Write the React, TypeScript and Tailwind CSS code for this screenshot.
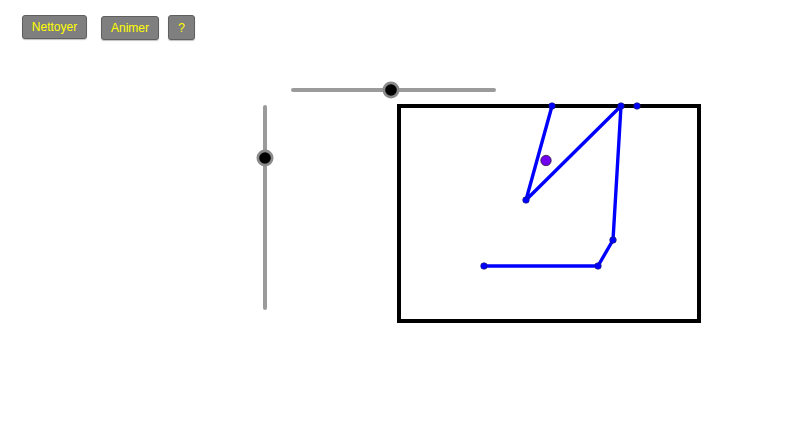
import React from "react";

const font = { fontFamily: '"Liberation Sans", Arial, sans-serif' };

function ToolButton({ label, className }: { label: string; className: string }) {
  return (
    <button
      className={`flex items-center justify-center rounded-[3px] border border-[#5f5f5f] bg-[#7f7f7f] text-[12px] text-[#ffff00] shadow-[0_1px_1px_rgba(0,0,0,0.25)] ${className}`}
    >
      {label}
    </button>
  );
}

// Points of the blue polyline, in canvas pixels.
const path: [number, number][] = [
  [552, 106],
  [526, 200],
  [621, 106],
  [613, 240],
  [598, 266],
  [484, 266],
];

export default function App() {
  return (
    <div className="relative h-[430px] w-[800px] overflow-hidden bg-white" style={font}>
      <svg className="absolute inset-0" width={800} height={430} viewBox="0 0 800 430">
        {/* horizontal slider */}
        <line x1={293} y1={90} x2={494} y2={90} stroke="#9b9b9b" strokeWidth={4} strokeLinecap="round" />
        <circle cx={391} cy={90} r={8.5} fill="#8a8a8a" />
        <circle cx={391} cy={90} r={5.8} fill="#000" />

        {/* vertical slider */}
        <line x1={265} y1={107} x2={265} y2={308} stroke="#9b9b9b" strokeWidth={4} strokeLinecap="round" />
        <circle cx={265} cy={158} r={8.5} fill="#8a8a8a" />
        <circle cx={265} cy={158} r={5.8} fill="#000" />

        {/* frame */}
        <rect x={399} y={106} width={300} height={215} fill="none" stroke="#000" strokeWidth={4} />

        {/* figure */}
        <polyline
          points={path.map((p) => p.join(",")).join(" ")}
          fill="none"
          stroke="#0000ff"
          strokeWidth={3.4}
          strokeLinejoin="round"
        />
        {[...path, [637, 106] as [number, number]].map(([x, y], i) => (
          <circle key={i} cx={x} cy={y} r={3.3} fill="#0000ff" stroke="#202060" strokeWidth={0.6} />
        ))}
        <circle cx={546} cy={160.5} r={5.2} fill="#7000ee" stroke="#302040" strokeWidth={0.8} />
      </svg>

      <div className="relative flex items-start pl-[22px] pt-[15px]">
        <ToolButton label="Nettoyer" className="h-[24px] w-[65px]" />
        <ToolButton label="Animer" className="ml-[14px] mt-px h-[24px] w-[58px]" />
        <ToolButton label="?" className="ml-[9px] h-[25px] w-[27px]" />
      </div>
    </div>
  );
}
